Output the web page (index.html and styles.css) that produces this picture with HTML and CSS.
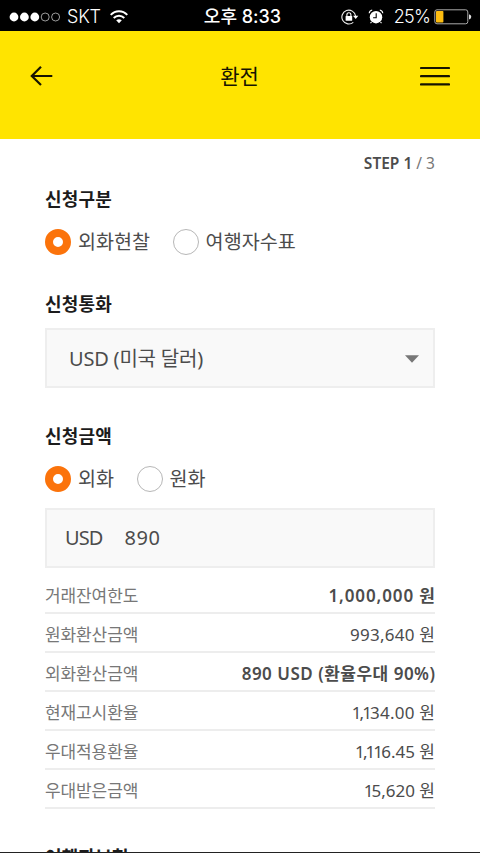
FILE: index.html
```
<!DOCTYPE html>
<html lang="ko">
<head>
<meta charset="utf-8">
<title>환전</title>
<link rel="stylesheet" href="styles.css">
</head>
<body>
<div class="screen">
  <div class="status">
    <div class="carrier">
      <svg class="signal" width="52" height="10" viewBox="0 0 52 10"><g fill="#fff"><circle cx="5" cy="5" r="4.4"/><circle cx="15.4" cy="5" r="4.4"/><circle cx="25.8" cy="5" r="4.4"/></g><g fill="none" stroke="#ddd" stroke-width=".7"><circle cx="36.2" cy="5" r="4"/><circle cx="46.6" cy="5" r="4"/></g></svg>
      <span class="network">SKT</span>
      <svg class="wifi" width="18" height="14" viewBox="0 0 18 14"><g fill="none" stroke="#fff" stroke-width="1.9"><path d="M.7 4.9Q4.2 1.200 9 1.200t8.300 3.700"/><path d="M3.700 8Q6 5.700 9 5.700t5.300 2.300"/></g><path d="M6.200 10.300Q9 8 11.800 10.300L9 13.300z" fill="#fff"/></svg>
    </div>
    <div class="clock">오후 8:33</div>
    <div class="indicators">
      <svg class="lock" width="18" height="16" viewBox="0 0 18 16"><path d="M12.300 13.300A6.900 6.900 0 1 1 14.600 7" fill="none" stroke="#eee" stroke-width="1.100"/><path d="M12 6.700h5.300l-2.600 3.200z" fill="#fff"/><rect x="4.600" y="7" width="6.600" height="4.800" rx=".5" fill="#fff"/><path d="M5.900 7.200V5.700a2 2 0 0 1 4 0v1.500" fill="none" stroke="#fff" stroke-width="1.100"/></svg>
      <svg class="alarm" width="16" height="16" viewBox="0 0 16 16"><circle cx="8" cy="8.200" r="6.200" fill="#fff"/><path d="M8.200 4.300v4.400H5.100" fill="none" stroke="#000" stroke-width="1.100"/><path d="M1.200 4.200Q1.500 1.500 4.200 1M14.800 4.200Q14.500 1.500 11.800 1M3.500 13l-1 1.200M12.500 13l1 1.200" fill="none" stroke="#fff" stroke-width="1.100"/></svg>
      <span class="percent">25%</span>
      <svg class="battery" width="38" height="16" viewBox="0 0 38 16"><rect x=".8" y=".8" width="33" height="14" rx="2.200" fill="none" stroke="#aaa" stroke-width="1"/><rect x="2" y="2" width="7.400" height="11.600" rx=".8" fill="#fdbd10"/><path d="M35 5.200q2.300.5 2.300 2.600T35 10.400z" fill="#ddd"/></svg>
    </div>
  </div>
  <header class="header">
    <svg class="back" width="24" height="22" viewBox="0 0 24 22"><path d="M12 1.800 2.800 11l9.200 9M2.800 11h20.500" fill="none" stroke="#171400" stroke-width="2.200"/></svg>
    <h1 class="title">환전</h1>
    <svg class="menu" width="30" height="20" viewBox="0 0 30 20"><path d="M1 2h28M1 10.200h28M1 18.400h28" stroke="#171400" stroke-width="2.200" stroke-linecap="round"/></svg>
  </header>
  <main class="content">
    <p class="step"><b>STEP 1</b> / 3</p>
    <h2 class="heading heading-kind">신청구분</h2>
    <div class="radios">
      <span class="radio on"></span><span class="label">외화현찰</span>
      <span class="radio"></span><span class="label">여행자수표</span>
    </div>
    <h2 class="heading heading-currency">신청통화</h2>
    <div class="field select"><span>USD (미국 달러)</span><svg width="14" height="8" viewBox="0 0 14 8"><path d="M0 .3h14L7 7.700z" fill="#777"/></svg></div>
    <h2 class="heading heading-amount">신청금액</h2>
    <div class="radios">
      <span class="radio on"></span><span class="label">외화</span>
      <span class="radio"></span><span class="label">원화</span>
    </div>
    <div class="field amount"><span class="unit">USD</span><span class="value">890</span></div>
    <dl class="summary">
      <div class="row"><dt>거래잔여한도</dt><dd class="strong limit">1,000,000 원</dd></div>
      <div class="row"><dt>원화환산금액</dt><dd class="wide">993,640 원</dd></div>
      <div class="row"><dt>외화환산금액</dt><dd class="strong">890 USD (환율우대 90%)</dd></div>
      <div class="row"><dt>현재고시환율</dt><dd class="wide"><span class="ones">1,1</span>34.00 원</dd></div>
      <div class="row"><dt>우대적용환율</dt><dd><span class="ones">1,11</span>6.45 원</dd></div>
      <div class="row"><dt>우대받은금액</dt><dd><span class="ones">1</span>5,620 원</dd></div>
    </dl>
    <h2 class="heading heading-insurance">여행자보험</h2>
  </main>
  <div class="edge"></div>
</div>
</body>
</html>
```
FILE: styles.css
```
* { box-sizing: border-box; margin: 0; padding: 0; }
body { background: #fff; color: #4c4c4c; font-family: "Noto Sans", "Noto Sans CJK KR", sans-serif; overflow: hidden; }
svg { display: block; flex: none; }
.screen { width: 480px; height: 853px; overflow: hidden; position: relative; white-space: nowrap; }
.status { height: 31px; background: #000; color: #fff; display: grid; grid-template-columns: 1fr auto 1fr; align-items: center; padding: 2px 8px 0 9px; font-family: Inter, "Noto Sans CJK KR", sans-serif; font-size: 18px; line-height: 28px; }
.carrier, .indicators { display: flex; align-items: center; }
.indicators { justify-content: flex-end; }
.network { margin-left: 6px; font-weight: 300; letter-spacing: -.2px; }
.wifi { margin-left: 9px; }
.clock { font-weight: 500; font-size: 18px; padding-left: 4px; }
.alarm { margin-left: 9px; }
.percent { margin-left: 10px; font-weight: 300; letter-spacing: -.8px; }
.battery { margin-left: 4px; }
.header { height: 108px; background: #ffe400; display: flex; justify-content: space-between; align-items: flex-start; padding: 30px 30px 0 29px; }
.back { margin-top: 4px; }
.menu { margin-top: 5px; }
.title { font-size: 21px; line-height: 30px; font-weight: 400; color: #171400; margin-left: 6px; }
.content { padding: 0 45px; display: flex; flex-direction: column; }
.step { margin-top: 14px; height: 20px; line-height: 20px; font-size: 15.500px; text-align: right; color: #777; }
.step b { font-weight: 600; color: #4c4c4c; }
.heading { height: 26px; line-height: 26px; font-size: 18px; letter-spacing: .2px; font-weight: 700; color: #1c1c1c; }
.heading-kind { margin-top: 13px; }
.heading-currency { margin-top: 34px; }
.heading-amount { margin-top: 35px; }
.heading-insurance { margin-top: 35px; }
.radios { display: flex; align-items: center; height: 30px; margin-top: 15px; }
.radio { width: 26px; height: 26px; border: 1px solid #b7b7b7; border-radius: 50%; }
.radio.on { border: 8px solid #fb730b; }
.label { font-size: 19.6px; line-height: 30px; margin: 0 22.500px 0 7px; }
.field { height: 60px; border: 2px solid #eee; background: #f9f9f9; display: flex; align-items: center; font-size: 20px; line-height: 30px; }
.select { margin-top: 11px; padding: 2px 14px 0 22px; justify-content: space-between; letter-spacing: -.2px; }
.amount { margin-top: 14px; padding-left: 18px; }
.unit { margin-right: 22px; letter-spacing: -.9px; }
.value { letter-spacing: .5px; }
.summary { margin-top: 7px; }
.row { height: 39px; border-bottom: 2px solid #ededed; display: flex; justify-content: space-between; align-items: center; line-height: 26px; font-size: 17px; padding-top: 4px; }
.row dt { color: #777; letter-spacing: -.1px; }
.strong { font-weight: 600; letter-spacing: .5px; margin-right: -.5px; }
.limit { letter-spacing: .9px; margin-right: -.9px; }
.wide { letter-spacing: .25px; margin-right: -.25px; }
.ones { letter-spacing: -1.900px; }
.edge { position: absolute; left: 0; right: 0; bottom: 0; height: 1px; background: #222; }
```
